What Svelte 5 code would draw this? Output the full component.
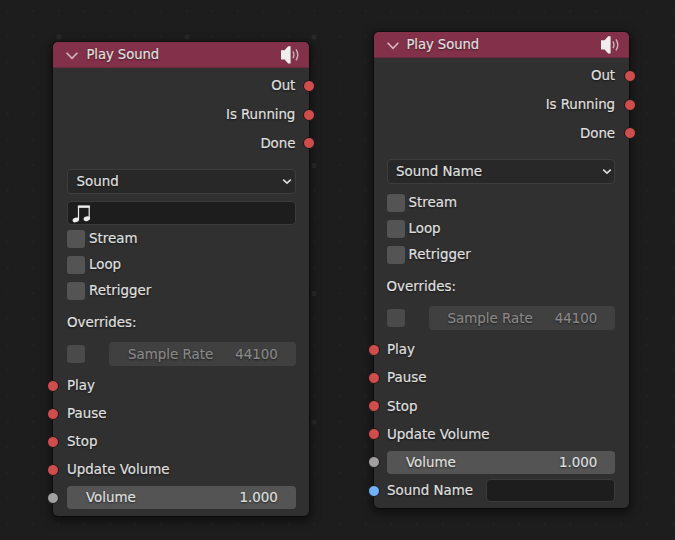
<script>
  const outputs = ['Out', 'Is Running', 'Done'];
  const options = ['Stream', 'Loop', 'Retrigger'];
  const triggers = ['Play', 'Pause', 'Stop', 'Update Volume'];
  const nodes = [
    { x: 53, y: 42, w: 256.3, h: 473.7, mode: 'Sound', named: false },
    { x: 374, y: 32, w: 255.3, h: 476.3, mode: 'Sound Name', named: true }
  ];

  // Faint canvas grid, with stronger marks every fifth step.
  const cols = Array.from({ length: 27 }, (_, i) => 7.6 + i * 25.58);
  const rows = Array.from({ length: 21 }, (_, i) => 11 + i * 25.65);
  const marks = [[59, 37], [187, 37], [314, 37], [314, 165.5], [314, 293.5], [314, 422]];
</script>

<main>
  <svg class="grid" width="675" height="540" aria-hidden="true">
    {#each rows as y}
      {#each cols as x}
        <rect x={x - 1.5} y={y - 1.5} width="3" height="3" rx="1" fill="#212121" />
      {/each}
    {/each}
    {#each marks as [x, y]}
      <rect x={x - 2.5} y={y - 2.5} width="5" height="5" rx="1.5" fill="#292929" />
    {/each}
  </svg>

  {#each nodes as node}
    <section class="node" class:named={node.named} style="left:{node.x}px;top:{node.y}px;width:{node.w}px;height:{node.h}px">
      <header>
        <svg class="collapse" width="14" height="10" viewBox="0 0 14 10"><path d="M1.6 1.8 L7 7.4 L12.4 1.8" /></svg>
        <h2>Play Sound</h2>
        <svg class="speaker" width="20" height="20" viewBox="0 0 20 20">
          <path class="cone" d="M1 5.2 H4.6 L8.2 1.3 H10.6 V18.5 H8.2 L4.6 14.6 H1 Z" />
          <path class="wave" d="M12.9 6.4 Q15 9.8 12.9 13.2 M16 4.3 Q19.6 9.8 16 15.3" />
        </svg>
      </header>

      <div class="outputs">
        {#each outputs as name}
          <div class="output"><span>{name}</span><i class="socket"></i></div>
        {/each}
      </div>

      <div class="props">
        <div class="select">
          <span>{node.mode}</span>
          <svg width="10" height="7" viewBox="0 0 10 7"><path d="M1.2 1.6 L5 5.2 L8.8 1.6" /></svg>
        </div>
        {#if !node.named}
          <div class="picker">
            <svg width="20" height="20" viewBox="0 0 20 20">
              <path class="beam" d="M6.5 15.5 V2.6 H17.2 V14.5" />
              <path class="bar" d="M5.9 1.4 H17.8 V3.8 H5.9 Z" />
              <ellipse cx="3.8" cy="15.9" rx="3.3" ry="2.3" transform="rotate(-18 3.8 15.9)" />
              <ellipse cx="14.8" cy="14.8" rx="3.3" ry="2.3" transform="rotate(-18 14.8 14.8)" />
            </svg>
          </div>
        {/if}
        <div class="options">
          {#each options as name}
            <div class="option"><b class="box"></b><span>{name}</span></div>
          {/each}
        </div>
        <div class="heading">Overrides:</div>
        <div class="override">
          <b class="box dim"></b>
          <div class="slider disabled"><span>Sample Rate</span><span>44100</span></div>
        </div>
      </div>

      <div class="inputs">
        {#each triggers as name}
          <div class="input"><i class="socket"></i><span>{name}</span></div>
        {/each}
        <div class="input">
          <i class="socket value"></i>
          <div class="slider"><span>Volume</span><span>1.000</span></div>
        </div>
        {#if node.named}
          <div class="input"><i class="socket string"></i><span>Sound Name</span><div class="text"></div></div>
        {/if}
      </div>
    </section>
  {/each}
</main>

<style>
  :global(body) { margin: 0; background: #1d1d1d; }
  main {
    position: relative; width: 675px; height: 540px; overflow: hidden; background: #1d1d1d;
    font: 13.4px/18px "DejaVu Sans", sans-serif; color: #e0e0e0;
    -webkit-text-stroke: .15px currentColor;
    text-shadow: 0 1px 2px rgba(0, 0, 0, .6); white-space: nowrap;
  }
  main :global(*) { box-sizing: border-box; }
  .grid { display: block; }
  svg { flex: none; fill: none; }
  .node {
    position: absolute; border-radius: 5px; background: #303030;
    box-shadow: 0 0 1px 1px rgba(0, 0, 0, .35), 0 3px 10px 3px rgba(0, 0, 0, .42);
  }
  span { padding-top: 1px; }
  header {
    height: 26px; display: flex; align-items: center; padding: 0 9px 0 12.4px;
    background: #83314a; border-radius: 5px 5px 0 0; border-bottom: 1px solid #6b2a3f;
  }
  h2 { margin: 0 auto 0 7px; font-size: 13.2px; font-weight: 400; letter-spacing: -.05px; }
  .named h2 { margin-left: 6px; }
  .collapse { stroke: #d5b6bf; stroke-width: 1.6; margin-top: 2px; }
  .cone { fill: #eeeeee; }
  .wave { stroke: #cdb1ba; stroke-width: 1.4; }

  .outputs { padding-top: 3.5px; }
  .output { height: 28.75px; display: flex; align-items: center; justify-content: flex-end; gap: 8px; margin-right: -6px; letter-spacing: -.08px; }
  .named .output { margin-right: -6.7px; gap: 9px; }
  .socket { flex: none; width: 12px; height: 12px; border-radius: 50%; background: #d04d4d; border: 1px solid #1c1616; }
  .value { background: #a1a1a1; }
  .string { background: #70b2ff; }

  .props { padding: 11.25px 13.5px 0 14px; }
  .named .props { padding: 11.25px 14px 0 12.5px; }
  .select {
    height: 24.5px; display: flex; align-items: center; justify-content: space-between;
    padding: 0 2.5px 0 8.5px; background: #282828; border: 1px solid #3d3d3d; border-radius: 4px;
  }
  .select svg { stroke: #dddddd; stroke-width: 1.6; margin-top: 1px; }
  .picker {
    height: 24.5px; margin-top: 7px; padding: 2px 4px; background: #1d1d1d;
    border: 1px solid #3b3b3b; border-radius: 4px;
  }
  .picker svg { display: block; }
  .picker ellipse, .bar { fill: #ededed; }
  .beam { stroke: #ededed; stroke-width: 1.2; }
  .options { padding-top: 1px; }
  .named .options { padding-top: 6.5px; }
  .option { height: 26px; display: flex; align-items: center; gap: 4px; }
  .option span { padding-top: 0; }
  .box { flex: none; width: 18px; height: 18px; border-radius: 3px; background: #545454; }
  .dim { background: #4a4a4a; }
  .heading { height: 28px; margin-top: 4px; line-height: 29px; }
  .override { margin-top: 6px; height: 24px; display: flex; align-items: center; gap: 24px; }
  .slider {
    flex: 1; height: 23.5px; display: flex; align-items: center; justify-content: space-between;
    padding: 0 18px 0 19px; border-radius: 4px; background: #545454;
  }
  .disabled { height: 24px; background: #404040; color: #898989; }

  .inputs { padding: 5.5px 13.5px 0 0; margin-left: -6px; }
  .named .inputs { padding: 5.6px 14px 0 0; }
  .input { height: 28px; display: flex; align-items: center; gap: 8px; }
  .named .input { height: 28.2px; gap: 7px; }
  .text { flex: none; width: 129.5px; height: 23px; margin-left: auto; border-radius: 4px; background: #1d1d1d; border: 1px solid #3a3a3a; }
</style>
